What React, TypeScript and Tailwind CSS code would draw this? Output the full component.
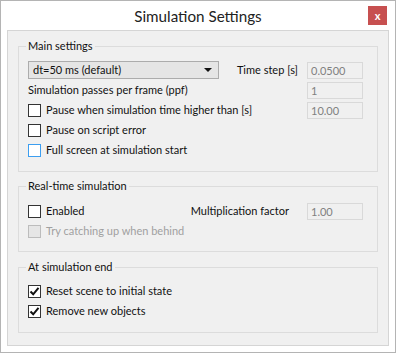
import React from "react"

function Box({ checked, state }: { checked?: boolean; state?: "focus" | "disabled" }) {
  const cls =
    state === "disabled"
      ? "border-[#bcbcbc] bg-[#e6e6e6]"
      : state === "focus"
        ? "border-[#3c9ef0] bg-white"
        : "border-[#333333] bg-white"
  return (
    <span className={`w-[13px] h-[13px] border flex items-center justify-center shrink-0 ${cls}`}>
      {checked && (
        <svg width="11" height="11" viewBox="0 0 11 11">
          <path d="M1.5 5.5 L4.2 8.3 L9.5 1.8" fill="none" stroke="#111" strokeWidth="2" />
        </svg>
      )}
    </span>
  )
}

function Check({ label, checked, state }: { label: string; checked?: boolean; state?: "focus" | "disabled" }) {
  return (
    <div className="flex items-center gap-[5px]">
      <Box checked={checked} state={state} />
      <span className={state === "disabled" ? "text-[#a0a0a0]" : "text-[#111]"}>{label}</span>
    </div>
  )
}

function Field({ value }: { value: string }) {
  return (
    <div className="w-[56px] h-[17px] border border-[#d9d9d9] bg-[#f0f0f0] text-[#808080] pl-[3px] leading-[15px]">
      {value}
    </div>
  )
}

function Group({ title, children, className }: { title: string; children: React.ReactNode; className: string }) {
  return (
    <div className={`relative border border-[#dcdcdc] pl-[9px] pr-[14px] ${className}`}>
      <span className="absolute left-[7px] top-[-9px] px-[2px] bg-[#f0f0f0] leading-[16px] text-[#111]">{title}</span>
      {children}
    </div>
  )
}

export default function App() {
  return (
    <div className="w-[396px] h-[353px] border border-[#b4b4b4] bg-white text-[11px] font-['Lato','Noto_Sans',sans-serif] flex flex-col">
      <div className="h-[29px] flex items-center justify-center relative shrink-0">
        <span className="text-[15.2px] text-[#222] mt-[1px]">Simulation Settings</span>
        <div className="absolute right-[8px] top-[5px] w-[19px] h-[19px] bg-[#c75050] flex items-center justify-center text-white font-bold text-[11px] leading-none">
          x
        </div>
      </div>
      <div className="mx-[6px] h-[316px] border border-[#d5d5d5] bg-[#f0f0f0] px-[10px] pt-[15px] flex flex-col">
        <Group title="Main settings" className="h-[126px] pt-[13px]">
          <div className="h-[20px] flex items-center">
            <div className="w-[191px] h-[18px] border border-[#acacac] bg-[#e5e5e5] flex items-center justify-between pl-[4px] pr-[6px] text-[#111]">
              <span>dt=50 ms (default)</span>
              <svg width="8" height="4" viewBox="0 0 8 4">
                <path d="M0 0 H8 L4 4 Z" fill="#111" />
              </svg>
            </div>
            <span className="ml-auto mr-[9px] text-[#111]">Time step [s]</span>
            <Field value="0.0500" />
          </div>
          <div className="h-[20px] flex items-center">
            <span className="text-[#111]">Simulation passes per frame (ppf)</span>
            <div className="ml-auto">
              <Field value="1" />
            </div>
          </div>
          <div className="h-[20px] flex items-center">
            <Check label="Pause when simulation time higher than [s]" />
            <div className="ml-auto">
              <Field value="10.00" />
            </div>
          </div>
          <div className="h-[20px] flex items-center">
            <Check label="Pause on script error" />
          </div>
          <div className="h-[20px] flex items-center">
            <Check label="Full screen at simulation start" state="focus" />
          </div>
        </Group>
        <Group title="Real-time simulation" className="h-[66px] mt-[14px] pt-[14px]">
          <div className="h-[20px] flex items-center">
            <Check label="Enabled" />
            <span className="ml-auto mr-[18px] text-[#111]">Multiplication factor</span>
            <Field value="1.00" />
          </div>
          <div className="h-[20px] flex items-center">
            <Check label="Try catching up when behind" state="disabled" />
          </div>
        </Group>
        <Group title="At simulation end" className="h-[66px] mt-[15px] pt-[13px]">
          <div className="h-[20px] flex items-center">
            <Check label="Reset scene to initial state" checked />
          </div>
          <div className="h-[20px] flex items-center">
            <Check label="Remove new objects" checked />
          </div>
        </Group>
      </div>
    </div>
  )
}
